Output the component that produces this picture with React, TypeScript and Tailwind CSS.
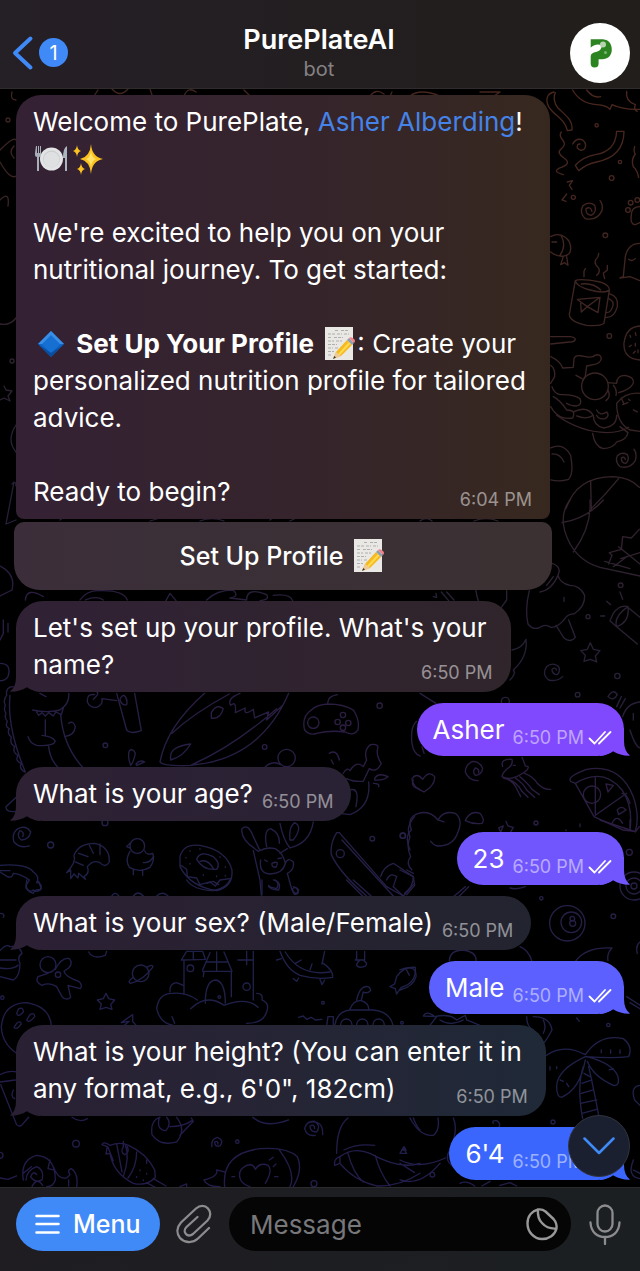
import type { ReactNode } from "react";

function Wallpaper() {
  return (
    <svg
      aria-hidden="true"
      className="pointer-events-none absolute inset-0 h-full w-full"
      viewBox="0 0 640 1271"
      preserveAspectRatio="xMidYMin slice"
    >
      <defs>
        <linearGradient id="ink" gradientUnits="userSpaceOnUse" x1="640" y1="90" x2="250" y2="1187">
          <stop offset="0" stopColor="#4a271c" />
          <stop offset="0.25" stopColor="#3a2424" />
          <stop offset="0.48" stopColor="#272036" />
          <stop offset="0.6" stopColor="#2b1d42" />
          <stop offset="0.8" stopColor="#1f214a" />
          <stop offset="1" stopColor="#221c4a" />
        </linearGradient>
        <mask id="doodles" maskUnits="userSpaceOnUse" x="0" y="0" width="640" height="1271">
          <g fill="none" stroke="#fff" strokeWidth="4" strokeLinecap="round" strokeLinejoin="round">
            {/* confetti, mug, flowers */}
            <g transform="translate(400 90) scale(.3333)">
              <path d="M462 6C440 10 436 30 446 50C462 78 494 84 502 122L516 120C520 90 494 74 474 54C462 40 460 20 466 8M518 0Q540 40 590 44Q620 46 630 58L636 44Q670 60 720 58M560 0Q580 26 602 20" />
              <path d="M650 124L672 124C672 180 640 206 590 216Q560 222 536 242L526 226Q550 200 586 194C626 188 648 168 650 124ZM484 126Q476 136 488 150T484 176T492 204T484 232T490 254" />
              <path d="M518 162Q530 142 548 150Q562 162 554 176Q542 186 532 174Q530 162 540 162M576 364Q572 348 558 356Q556 374 574 376Q592 366 584 346Q566 332 548 348Q538 370 556 386Q590 394 606 362Q610 344 600 332" />
              <path d="M502 276L518 272L508 286L516 298M500 312L486 330L498 334M680 4Q676 34 706 44Q700 60 712 64M704 170Q700 186 706 192Q692 210 700 230Q712 240 716 262" />
              <circle cx="590" cy="106" r="5" /><circle cx="660" cy="216" r="5" /><circle cx="635" cy="264" r="7" /><circle cx="520" cy="322" r="6" /><circle cx="616" cy="436" r="7" /><circle cx="628" cy="738" r="7" /><circle cx="692" cy="338" r="7" /><circle cx="684" cy="360" r="7" /><circle cx="712" cy="330" r="7" />
              <path d="M720 350Q694 350 694 376Q690 404 706 404L720 398M452 440C480 424 514 444 512 478C510 504 474 504 452 486M484 438Q500 466 480 496M456 456H470M490 500L482 524L494 518L504 526L500 500M720 460Q684 460 676 500L670 560L660 564L690 560L720 572M686 508Q696 516 706 506" />
              <path d="M526 572L508 674Q510 696 560 706Q600 710 612 700L628 602M526 572Q540 564 600 576Q630 586 628 600Q616 612 570 600Q530 590 526 572ZM544 582Q580 578 602 600M630 612Q656 620 652 650Q642 686 616 682M626 626Q644 634 638 650Q632 668 620 668" />
              <path d="M532 628L600 622L594 668L562 650L534 630M562 650L544 666L542 640M562 650L600 622M552 560V544L556 536M590 556Q602 548 596 534Q580 520 588 508Q596 502 596 490M614 566L610 550L622 540V526" />
              <path d="M452 740H510Q526 742 526 748Q522 758 508 756L452 762M720 708Q678 710 672 760Q670 806 720 810M690 736L692 742M706 728L708 736M688 770L694 766M706 760V768M700 790L706 784M714 780V788" />
              <path d="M452 800Q480 812 488 834L520 832L522 806Q526 794 546 798Q580 806 584 796Q602 790 604 806Q600 822 580 824L560 828L556 858L548 872M452 826Q466 836 464 860L452 880M528 856L546 866" />
              <circle cx="585" cy="889" r="40" />
              <path d="M624 878L650 880Q650 856 676 856Q704 862 700 880Q690 900 656 908M640 886Q652 900 648 916M624 900Q634 920 618 932M456 890Q462 910 480 914Q520 912 540 926Q548 944 530 948Q510 948 500 940M460 920Q480 930 500 960Q530 960 518 984Q480 990 460 962L452 950" />
              <path d="M470 976Q540 1026 620 1028Q660 1028 686 1012M520 966Q560 946 580 976Q560 990 530 978M650 940Q676 906 720 910M650 940Q650 1000 690 1020L720 1024M580 976Q580 1006 610 1014Q650 1010 650 976M590 960Q600 980 620 966Q630 976 616 986Q596 990 590 976M664 924L672 942M684 938L668 944M686 928L690 932M700 960L712 966M578 1030Q584 1070 610 1076Q640 1074 650 1056Q680 1050 684 1028L660 1010" />
              <path d="M452 1074Q490 1056 512 1096Q522 1150 506 1168Q480 1176 452 1170M456 1092Q480 1090 492 1116M676 1108Q674 1098 664 1104Q664 1120 678 1120Q690 1108 682 1094Q664 1084 652 1098Q644 1114 660 1130Q690 1138 706 1112Q712 1090 702 1078M498 1256Q530 1160 640 1160Q690 1162 718 1192M572 1172L574 1260M656 1166Q620 1210 574 1256" />
            </g>
            {/* ball, ice pop, torch, jellyfish, pizza */}
            <g transform="translate(400 500) scale(.3333)">
              <path d="M510 0Q480 40 494 92Q520 180 600 202L720 228M570 0Q576 80 520 156M610 0Q560 56 486 68M626 192L636 166L628 158L664 148L668 110L694 114L718 88M656 140L720 192M614 184L690 206M680 170L640 200M662 176L720 158" />
              <path d="M388 272Q374 330 384 372Q400 392 420 382Q436 370 452 382Q470 384 490 362Q504 340 522 342Q556 320 554 286Q540 256 510 256Q480 250 474 226M456 190Q486 200 474 226Q456 270 420 276M468 376L492 414Q512 430 526 412L506 360M492 292V304M440 256L460 230" />
              <path d="M630 362L650 380Q690 366 684 320Q660 312 640 340ZM650 380Q640 350 684 320M650 380L712 432M686 324L720 352M660 276L668 298M620 304L632 314M602 348H614" />
              <circle cx="564" cy="350" r="6" /><circle cx="662" cy="256" r="7" /><circle cx="652" cy="528" r="8" /><circle cx="533" cy="584" r="7" /><circle cx="316" cy="604" r="12" /><circle cx="408" cy="969" r="6" /><circle cx="8" cy="1007" r="8" />
              <path d="M571 428L580 448L600 452L586 468L590 486L571 478L552 484L556 466L542 452L562 448ZM470 510Q466 500 456 508Q456 524 472 524Q484 510 474 498Q456 486 440 500Q424 524 446 540Q472 546 488 530M336 450Q366 446 378 418Q384 470 340 510M340 510Q350 520 330 540" />
              <path d="M60 580L108 610M100 290L110 292L108 280M124 276L146 302M140 276L162 300M228 272Q232 310 250 320M320 272V300L304 322M624 590Q640 564 652 584Q640 606 624 590ZM650 620L664 590M660 624L676 596M668 650Q680 610 720 606M700 640V660M690 690Q706 740 720 744M50 664Q30 680 36 730Q40 760 60 768M66 740L72 760" />
              <path d="M236 818Q238 806 226 804Q216 816 226 826Q244 826 248 806Q240 784 218 784Q196 794 196 816Q206 842 234 842M68 838Q50 816 36 836Q36 860 72 876Q106 856 104 830Q88 810 68 838Z" />
              <path d="M308 800Q300 776 336 778Q340 796 322 806Q306 820 306 830Q326 840 350 830Q390 810 384 800L376 798Q370 780 366 772M310 834Q340 840 352 870L362 890M326 838Q350 846 366 874L384 892M346 834Q370 850 380 870L404 892M360 830Q384 850 396 868L418 884M374 820Q400 830 412 850Q430 870 452 868M340 796H346" />
              <path d="M512 844Q500 830 560 808Q660 790 700 890Q720 950 706 994L668 990L582 950L526 850ZM526 850Q610 800 666 870Q700 920 690 992M586 830V946L680 880" />
              <circle cx="576" cy="884" r="26" />
              <path d="M618 852L640 856L624 876ZM652 930Q664 914 678 930L656 944ZM636 970Q650 940 668 970M666 880Q680 880 690 910" />
              <path d="M30 1050Q12 1010 34 990Q20 950 56 940Q90 930 114 960Q130 930 166 940Q190 960 174 996Q160 1040 110 1038Q100 1034 92 1024M114 960L132 966M196 962Q210 930 240 940Q256 960 246 970Q220 974 196 962ZM318 964L324 978L340 982L332 996M302 996L296 984L310 978ZM498 990V992M540 972V980" />
            </g>
            {/* dinosaur, leaf, gamepad, chick, doughnut, rabbit */}
            <g transform="translate(0 580) scale(.3333)">
              <path d="M40 320Q16 320 20 346Q8 360 16 376Q10 390 18 400Q12 412 22 424Q14 440 28 446Q20 460 34 472Q28 490 44 500Q36 516 54 526Q44 544 64 550Q56 566 74 576M30 346Q20 440 76 576M120 340L138 350M206 340Q210 370 180 390Q140 400 98 390M110 396L116 406L126 398L136 408L146 398L160 408L168 396L184 404L190 384M182 404Q190 500 250 564M206 430Q220 420 226 440Q224 466 194 470M136 420V466M84 470Q90 490 110 496Q160 500 166 484Q160 470 126 466M146 500Q150 540 176 564" />
              <path d="M284 344Q260 340 262 366Q270 384 290 382Q310 374 306 356L350 362M280 358Q300 340 290 336M350 340L380 450Q390 464 424 452L404 340M372 346Q384 356 380 374Q366 378 360 360Q362 348 372 346ZM388 512Q398 504 406 520Q400 548 392 556Q382 530 388 512ZM408 552Q420 538 434 546L410 556Z" />
              <path d="M614 340Q500 440 480 546Q490 560 570 556Q780 540 866 340M516 460Q580 400 688 342M576 554Q700 500 830 386M512 536Q506 500 572 492Q550 530 512 540ZM720 340Q680 356 692 376Q710 360 706 398L736 384Q730 410 760 388L764 414L806 396L800 420L846 378M634 398Q650 370 670 386Q660 420 634 414ZM984 372Q980 350 1012 344M914 450Q904 410 934 390Q950 374 984 372Q1030 372 1060 390Q1080 420 1074 450Q1060 470 1036 456Q990 450 950 460Q930 468 914 450Z" />
              <circle cx="940" cy="428" r="17" /><circle cx="1029" cy="405" r="8" /><circle cx="1013" cy="426" r="8" /><circle cx="1045" cy="429" r="8" /><circle cx="1029" cy="443" r="8" /><circle cx="1139" cy="377" r="8" /><circle cx="316" cy="496" r="7" /><circle cx="794" cy="501" r="7" /><circle cx="152" cy="795" r="9" /><circle cx="1117" cy="776" r="7" /><circle cx="1209" cy="767" r="8" /><circle cx="1021" cy="821" r="12" /><circle cx="315" cy="728" r="9" /><circle cx="860" cy="534" r="26" />
              <path d="M796 560Q820 540 842 554M988 520Q1010 506 1018 540M994 540L1000 552M1030 580Q1040 560 1050 572Q1070 540 1090 560L1100 540Q1090 510 1112 494Q1140 490 1132 510Q1130 530 1144 550Q1130 580 1108 566L1090 604Q1060 606 1040 596M1124 596Q1134 576 1164 590Q1150 602 1124 600M1120 610Q1140 610 1136 620M1106 606Q1114 680 1050 704L1020 700M1050 630Q1080 620 1068 680" />
              <path d="M68 770Q74 756 60 752Q48 768 64 780Q88 780 92 756Q78 734 54 746Q34 760 42 786Q60 806 88 798M50 650L18 680Q16 698 50 694M0 856Q80 850 100 876Q120 890 110 908Q130 910 120 930Q106 926 100 940Q80 934 78 916L88 900Q60 880 40 880Q36 896 22 890L0 876M0 872H30" />
              <path d="M200 878Q230 846 222 826Q236 790 284 790Q330 800 328 846Q316 866 300 848Q280 838 262 860Q270 880 252 890L256 898L236 880L234 894L222 882L212 896V870ZM236 820L264 830M268 796L280 820M300 792V824M226 846L250 856" />
              <circle cx="412" cy="798" r="22" />
              <path d="M390 790L380 800L390 804M390 814Q374 840 388 862Q420 880 450 862Q466 840 458 820Q440 828 434 812M430 848Q450 850 460 830M400 870V884M428 870V886" />
              <path d="M540 830Q550 790 600 796Q680 810 696 870Q700 920 650 932Q570 920 540 860ZM590 838Q600 810 640 830Q664 850 650 868Q610 872 590 838ZM600 844Q624 836 640 866M542 856L560 868L562 890L590 894L600 914L630 906L646 918L660 900L690 896" />
              <path d="M570 812V814M600 806V808M660 830V832M676 860V862M570 850V852M650 888V890M610 884V886M676 886V888M558 832V834" />
              <path d="M776 814Q720 780 726 746Q744 728 760 770L780 812M800 800Q790 750 812 746Q840 760 838 790M760 812L780 900L784 946M780 812Q800 800 826 806Q850 820 856 850Q850 880 810 882Q776 880 782 840M856 850Q864 830 880 846Q884 870 862 880L876 930Q890 950 896 930Q884 914 876 930M820 900Q846 906 836 930Q810 930 806 916M794 840L802 844M834 836L844 834M816 850Q840 840 828 862Q814 862 816 850ZM940 726Q930 790 870 804Q850 780 840 730M870 780Q866 740 884 728Q910 740 880 780ZM840 820L862 806" />
              <path d="M1010 758Q990 790 994 824Q1020 880 1100 948M1018 758L1160 920L1210 948M1026 780L1180 948M1010 758H1018M1142 890Q1150 860 1180 850L1240 890Q1240 920 1214 940M1160 900Q1170 876 1190 890L1180 920M1236 870Q1216 850 1232 830Q1218 800 1230 770Q1216 740 1244 710M1240 600Q1230 620 1260 628M76 60Q80 20 130 50M240 60Q260 30 300 32Q370 30 382 60M256 60Q290 46 310 60M498 62L510 40L528 62M620 60Q650 30 700 30Q720 50 690 54L740 60Q740 20 800 44Q810 60 780 62M820 46Q870 40 878 62M10 120V160L0 180M24 130V156M0 250Q36 250 24 290Q14 304 0 302M334 950Q346 930 358 950M400 948Q414 930 430 948M470 948Q488 932 504 948" />
            </g>
            {/* gingerbread, planet, castle, saucer, robot, snail, cone, candy, bowl */}
            <g transform="translate(0 880) scale(.3333)">
              <path d="M80 0L78 24Q90 40 100 30Q110 40 124 26L116 4M0 100Q16 100 10 112M560 0Q580 30 640 32Q680 24 690 0M620 10L640 4L656 14M786 0V44M826 0Q840 10 830 26L806 20M880 20Q896 24 894 40Q880 50 878 30M1040 0L1090 50M1060 0L1116 50M1180 20L1210 48L1240 14" />
              <circle cx="144" cy="254" r="24" /><circle cx="174" cy="284" r="8" /><circle cx="571" cy="265" r="10" /><circle cx="740" cy="320" r="11" /><circle cx="969" cy="368" r="4" /><circle cx="1206" cy="428" r="4" /><circle cx="228" cy="791" r="10" /><circle cx="712" cy="785" r="5" /><circle cx="942" cy="911" r="9" /><circle cx="658" cy="351" r="4" /><circle cx="0" cy="826" r="9" /><circle cx="7" cy="353" r="5" />
              <path d="M166 268Q186 230 208 236Q220 250 206 264L192 274Q196 290 236 304Q250 316 240 326L204 316L212 352Q200 364 186 350L170 320Q150 306 126 316Q104 306 114 290L144 280M0 212Q20 190 30 200Q60 196 66 220Q50 230 60 250Q60 290 40 300L0 290M0 240H48M0 264Q40 270 54 256" />
              <circle cx="422" cy="280" r="25" />
              <path d="M400 292Q380 306 392 310Q430 300 458 262Q460 250 440 262M266 216Q280 240 316 226L320 214M318 340L326 356L344 360L332 374L336 388L318 382L300 388L304 372L292 360L310 356ZM4 440Q10 370 80 368Q150 380 154 438M4 440Q6 490 50 520M56 386Q70 380 70 396Q54 414 50 400ZM90 404Q104 396 104 410Q86 432 80 420ZM50 430Q62 420 64 432Q50 452 42 442ZM364 428L398 404V424L410 438M364 428L388 424L370 438" />
              <path d="M552 240V340M544 240L560 214H608L616 238ZM580 214V238M608 270L630 218M608 274H696L672 216M650 216V274M620 246H684M610 290L612 274M694 276V350M760 214V360M714 240H760M740 214V254M616 370Q616 300 648 300Q676 306 676 370M520 436Q480 430 470 386Q476 340 516 340Q560 336 592 360M510 336Q508 310 530 308L550 316M572 386Q620 340 672 376Q740 350 774 382M770 340Q790 340 786 360Q810 370 800 396Q790 430 740 430M516 410L524 430" />
              <path d="M840 214Q860 270 900 286Q950 300 998 292Q1000 270 970 250M830 240L844 236M856 216Q900 290 990 276M886 250L904 240M930 270L936 252M974 214L966 252M880 296L890 304L896 294M960 298L966 314L974 300M1070 214V236L1066 240L1094 240V214M1080 240Q1060 258 1080 262Q1100 262 1100 250L1090 240" />
              <path d="M1246 262Q1210 260 1190 290L1184 312L1170 320L1186 326L1190 342L1204 322Q1250 310 1246 262ZM1220 270L1228 286M1070 360Q1076 330 1090 322Q1110 314 1112 332Q1100 342 1090 336L1084 360M1050 388Q1060 360 1084 362Q1106 370 1106 386M1004 438Q1010 394 1050 390H1120Q1170 394 1180 438M984 410H1000V438M984 410L980 438M896 412L910 408L920 418L934 412L946 420L966 418" />
              <circle cx="1039" cy="434" r="17" /><circle cx="1087" cy="434" r="17" /><circle cx="1136" cy="434" r="17" />
              <path d="M0 584Q30 570 50 576M0 606L46 600M2 614L50 734Q60 744 70 730L86 712M40 630Q30 650 44 656M216 712Q240 730 262 716M480 712Q450 720 456 764Q480 800 530 786Q560 750 530 712M478 712Q468 750 498 752Q516 730 500 712M510 740Q550 740 576 722M540 766L580 724L574 714M758 712Q800 746 866 720" />
              <path d="M944 746Q944 730 930 738Q930 756 950 756Q964 736 944 724Q920 722 914 746Q920 770 946 766M968 764Q970 720 930 726M654 792Q654 780 644 786Q644 802 660 798Q674 780 652 772Q632 778 636 800" />
              <path d="M70 900Q60 840 110 826Q166 830 166 900Q160 920 140 920M110 884Q100 870 92 890Q104 910 126 900Q134 870 110 860Q80 870 78 900M96 920Q110 890 128 916M70 880L94 860M150 840L144 866L160 870M160 860Q174 900 200 894L210 884Q200 870 214 866Q236 880 230 920M0 894L24 898L50 888M206 900V918" />
              <path d="M306 794Q310 782 330 796Q360 784 386 796Q440 820 464 870L466 892Q440 920 400 910Q340 880 330 820L318 822L322 800ZM324 802L340 842M350 792L366 876M376 794Q390 830 370 890M410 816Q410 860 384 894M440 840V850M420 870V872M440 880V882M410 890V892M430 900V902M370 784V800Q360 818 374 824Q390 818 382 800M440 908L480 930M460 896L498 918" />
              <path d="M674 920Q664 820 780 806Q860 800 892 830Q910 870 880 920M838 810Q890 880 870 920M674 876L650 870Q656 890 612 900Q620 920 660 920M766 868Q760 850 740 856Q710 870 722 900Q730 914 750 920M766 868Q780 846 804 856Q820 870 796 910M696 890H704M824 890H834M808 840L820 832M820 860L828 852M540 920L560 912V920" />
              <path d="M1010 820Q1010 740 1044 714M1240 714Q1250 740 1260 750M1032 810Q1070 790 1124 796M1020 830Q1000 836 1004 856L1020 850ZM1020 830Q1060 800 1110 820Q1200 870 1260 850M1020 850Q1060 900 1130 918Q1200 920 1260 880M1044 820Q1060 880 1090 906M1126 826Q1140 880 1170 918M1200 820H1220L1210 804ZM1200 850L1244 878" />
            </g>
            {/* eight ball, palm */}
            <g transform="translate(400 820) scale(.3333)">
              <circle cx="502" cy="310" r="53" /><circle cx="514" cy="307" r="31" /><circle cx="517" cy="296" r="7" /><circle cx="518" cy="310" r="9" /><circle cx="640" cy="289" r="7" /><circle cx="688" cy="97" r="9" /><circle cx="424" cy="235" r="5" /><circle cx="625" cy="615" r="5" /><circle cx="702" cy="198" r="42" /><circle cx="702" cy="198" r="24" /><circle cx="702" cy="198" r="9" />
              <path d="M600 0L690 30L706 36L718 20M690 0V24M0 150L40 170L44 196L20 224M20 150L40 160M160 230L196 200M176 230L206 200M330 204Q350 210 376 200M528 422Q560 380 636 384Q620 400 624 422M680 530L720 556M690 548L720 566M720 366Q706 376 712 400M0 450Q50 430 48 470Q40 500 0 510M148 422Q150 390 190 390Q230 396 228 422M360 380Q386 390 396 424M90 616L110 590L70 588Q80 570 104 590Q150 580 170 600L196 586L200 600L240 616M120 600Q150 620 190 600M400 590Q450 590 456 630Q440 660 430 670M380 590Q380 620 400 630M430 600Q440 620 430 640M530 594L538 604" />
              <path d="M440 706Q490 670 556 704Q600 640 670 656Q700 680 686 710Q640 716 556 710Q470 750 470 800Q470 830 484 832Q540 810 556 720M560 710Q640 730 654 770Q660 800 640 796Q580 770 562 724M550 740Q530 800 548 896M566 740Q580 800 598 896M552 760L570 770M546 790L576 780M544 820L580 810M542 850L590 840M546 880L590 868M480 780L490 784M500 790L506 800M640 746L628 750M660 690V700M632 690V700M604 690V698M450 740V750M470 740V746M720 796Q690 800 704 840L720 856" />
            </g>
            {/* lower right */}
            <g transform="translate(400 1080) scale(.3333)">
              <circle cx="97" cy="284" r="7" /><circle cx="459" cy="126" r="6" />
              <path d="M30 114Q60 170 100 166Q120 150 114 114M160 114Q176 150 150 210Q130 240 160 260M0 240Q60 270 136 234M0 300Q60 320 120 250M6 210H18L12 200ZM280 130Q274 120 290 122Q304 130 296 144M180 310Q200 300 224 318M246 318L270 304M300 316L330 308L350 318M700 240Q680 290 720 296M700 270L720 280" />
            </g>
            {/* top edge and left margin */}
            <g strokeWidth="1.3">
              <path d="M12 92Q10 100 16 100M98 90L94 96M112 89Q120 98 128 89M150 89L152 95M184 96Q188 86 196 92M244 90L250 96M370 96Q376 88 384 94M392 92L390 96M410 96Q420 88 440 96M480 92H500L494 96M0 150Q14 136 16 140M0 162Q10 180 16 176M14 146Q8 152 14 158M0 200Q10 190 8 206M0 324Q10 326 16 318M4 386L6 390L12 391L8 396L10 401L4 398L0 400M16 425Q6 440 16 452M14 482L6 524L16 520M12 484Q16 480 16 486M0 566Q16 574 12 590L0 596" />
              <circle cx="8" cy="120" r="2" /><circle cx="12" cy="361" r="2" />
              <path d="M60 520L64 517M150 521L160 518M200 521Q212 516 224 521M270 520L274 517M290 521L296 518M420 521Q426 516 432 521M474 521Q486 516 498 521" />
            </g>
          </g>
        </mask>
      </defs>
      <rect width="640" height="1271" fill="url(#ink)" mask="url(#doodles)" />
    </svg>
  );
}

const emojiClass = "mx-px inline-block h-[34px] w-[34px] align-[-8px]";

function PlateEmoji() {
  return (
    <svg role="img" aria-label="Plate with fork and knife" className={emojiClass} viewBox="0 0 34 34">
      <path d="M1 4v9q0 2 2 2v14h2V15q2 0 2-2V4H6v7H5V4H4v7H3V4H2v7z" fill="#a7b0b8" />
      <path d="M33 4q-4 2-4 12h2v13h2z" fill="#a9b6c0" />
      <circle cx="17.500" cy="17" r="11.500" fill="#e3e4e6" />
      <circle cx="17.500" cy="17" r="8.500" fill="#cdced0" />
      <circle cx="17.500" cy="17.500" r="7.800" fill="#dfe0e2" />
    </svg>
  );
}

function SparklesEmoji() {
  return (
    <svg role="img" aria-label="Sparkles" className={emojiClass} viewBox="0 0 34 34">
      <g fill="#fcc21f">
        <path d="M21 2q1 13 12 15q-11 2-12 15q-1-13-11-15q10-2 11-15z" />
        <path d="M7 3q.5 5 4 6q-3.500 1-4 6q-.5-5-4-6q3.500-1 4-6z" />
        <path d="M11 21q.5 5 4 6q-3.500 1-4 6q-.5-5-4-6q3.500-1 4-6z" />
      </g>
      <path d="M21 9q1 7 5 8q-4 1-5 8q-1-7-5-8q4-1 5-8z" fill="#ffe36b" />
    </svg>
  );
}

function DiamondEmoji() {
  return (
    <svg role="img" aria-label="Blue diamond" className={emojiClass} viewBox="0 0 34 34">
      <path d="M17 4L30 17L17 30L4 17z" fill="#0e66c6" />
      <path d="M17 4L30 17H4z" fill="#3a8ee6" />
      <path d="M17 8L26 17L17 26L8 17z" fill="#1670d2" />
      <path d="M4 17L17 30L30 17L17 26z" fill="#0a4d9e" />
    </svg>
  );
}

function MemoEmoji() {
  return (
    <svg role="img" aria-label="Memo" className={emojiClass} viewBox="0 0 34 34">
      <path d="M3 0H31V33H3z" fill="#e9e8e5" />
      <path
        d="M13 3.500h4M19 3.500h7M6 7h7M15 7h5M22 7h5M6 10.500h4M12 10.500h9M6 14h6M14 14h6M6 17.500h9M6 21h5M13 21h3M6 24.500h6M6 28h4"
        stroke="#a8a8a8"
        strokeWidth="0.900"
        strokeDasharray="3 1"
      />
      <path d="M11 32L14 25L25 13L30 18L19 29z" fill="#f5b921" />
      <path d="M16 27L27 15L28.500 16.500L17 29z" fill="#ffdc4d" />
      <path d="M11 32L14 25L19 29z" fill="#efc999" />
      <path d="M11 32L12.300 29L14 30.600z" fill="#333" />
      <path d="M25 13L27 11L32 16L30 18z" fill="#8f9fb0" />
      <path d="M27 11Q29 9 32 12Q34 14 32 16z" fill="#ee8287" />
    </svg>
  );
}

function Tail({ side, className }: { side: "left" | "right"; className: string }) {
  const place = side === "left" ? "-left-[6px]" : "-right-[6px] -scale-x-100";
  return (
    <svg aria-hidden="true" viewBox="0 0 30 28" className={`absolute bottom-0 h-7 w-[30px] ${place} ${className}`}>
      <path d="M6 0V13Q6 23 0 27.600Q9 28 17 23.200Q22 27 30 28V0z" fill="currentColor" />
    </svg>
  );
}

function Time({ children }: { children: ReactNode }) {
  return <time className="whitespace-nowrap text-[18px] leading-5 text-white/50">{children}</time>;
}

function Incoming({
  lead,
  last,
  tone,
  tail,
}: {
  lead?: string;
  last: string;
  tone: string;
  tail: string;
}) {
  return (
    <li className={`relative mt-[11px] w-fit rounded-[27px] bg-linear-to-r pt-2 pr-[18px] pb-[9px] pl-[17px] ${tone}`}>
      <Tail side="left" className={tail} />
      {lead && <p className="relative pr-[6px]">{lead}</p>}
      <div className="relative flex items-end justify-between gap-[9px]">
        <p>{last}</p>
        <Time>6:50 PM</Time>
      </div>
    </li>
  );
}

function Outgoing({ text, tone, tail }: { text: string; tone: string; tail: string }) {
  return (
    <li className={`relative mt-[11px] flex w-fit items-end self-end rounded-[27px] pt-2 pr-3 pb-2 pl-4 ${tone}`}>
      <Tail side="right" className={tail} />
      <p className="relative mr-2">{text}</p>
      <span className="relative flex items-center gap-1">
        <Time>6:50 PM</Time>
        <svg role="img" aria-label="Read" viewBox="0 0 24 16" className="h-4 w-6">
          <path
            d="M1.500 8.500L6.500 13.500L17 2M11 13.500L22.500 2"
            fill="none"
            stroke="#fff"
            strokeWidth="1.800"
            strokeLinecap="round"
            strokeLinejoin="round"
          />
        </svg>
      </span>
    </li>
  );
}

export default function App() {
  return (
    <div className="relative flex min-h-screen flex-col overflow-hidden bg-black font-['Inter','Noto_Sans',sans-serif] text-[26px] leading-[37px] text-white">
      <Wallpaper />

      <header className="relative flex h-[89px] items-center justify-between border-b border-[#302c2d] bg-linear-to-r from-[#251f26] to-[#211e1b] pt-[17px] pr-[10px] pl-[11px]">
        <a href="#chats" aria-label="Back, 1 unread chat" className="flex w-[57px] items-center gap-[5px]">
          <svg aria-hidden="true" viewBox="0 0 23 36" className="h-9 w-[23px] shrink-0">
            <path d="M19.500 3.500L4 18L19.500 32.500" fill="none" stroke="#3f8af7" strokeWidth="4" strokeLinecap="round" strokeLinejoin="round" />
          </svg>
          <span className="flex h-[29px] w-[29px] shrink-0 items-center justify-center rounded-full bg-[#3f8af7] text-[20px] leading-none">
            1
          </span>
        </a>
        <div className="flex flex-col items-center">
          <h1 className="text-[27px] leading-[32px] font-semibold">PurePlateAI</h1>
          <p className="text-[20px] leading-[26px] text-[#858284]">bot</p>
        </div>
        <button type="button" aria-label="PurePlateAI profile" className="h-[60px] w-[60px] rounded-full bg-white">
          <svg aria-hidden="true" viewBox="0 0 60 60" className="h-full w-full">
            <path
              d="M20.700 16.300H33C39 17 41.800 21 41.800 26.500C41.800 32.500 38 36.300 32 36.300H28.600V41Q28.300 44.500 24.600 44.500Q20.700 44.500 20.700 40.500V34C20.700 30.500 23 29.500 26 29C30 28 31.300 26 32 22.500C28 20.500 24.500 21.500 20.700 24.500z"
              fill="#2b8420"
            />
            <circle cx="33" cy="21.500" r="3" fill="#b5d3b0" />
            <circle cx="35.500" cy="29.500" r="1.500" fill="#7db573" />
          </svg>
        </button>
      </header>

      <main className="relative flex-1 pt-[6px] pr-4 pb-[6px] pl-4">
        <ul className="flex flex-col">
          <li className="w-full max-w-[534px] rounded-t-[25px] rounded-b-lg bg-linear-to-r from-[#342134] via-[#35242c] to-[#37281f] pt-2 pr-[18px] pb-[9px] pl-[17px]">
            <p>
              Welcome to PurePlate,{" "}
              <a href="#asher" className="text-[#4583e8]">
                Asher Alberding
              </a>
              !
              <br />
              <PlateEmoji />
              <SparklesEmoji />
            </p>
            <p className="mt-[37px]">
              We're excited to help you on your
              <br />
              nutritional journey. To get started:
            </p>
            <p className="mt-[37px]">
              <DiamondEmoji /> <strong className="font-bold">Set Up Your Profile</strong> <MemoEmoji />: Create your
              personalized nutrition profile for tailored advice.
            </p>
            <div className="mt-[37px] flex items-end justify-between">
              <p>Ready to begin?</p>
              <Time>6:04 PM</Time>
            </div>
          </li>
          <li className="-ml-[2px] mt-[3px] w-full max-w-[538px]">
            <button
              type="button"
              className="flex h-[68px] w-full items-center justify-center gap-[7px] rounded-t-[10px] rounded-b-[26px] bg-linear-to-r from-[#3b2e3a] to-[#3b3132] text-[25px] font-medium"
            >
              Set Up Profile
              <MemoEmoji />
            </button>
          </li>
          <Incoming
            lead="Let's set up your profile. What's your"
            last="name?"
            tone="from-[#302135] to-[#30252b]"
            tail="text-[#302135]"
          />
          <Outgoing text="Asher" tone="bg-[#8049fe]" tail="text-[#8049fe]" />
          <Incoming last="What is your age?" tone="from-[#2e2134] to-[#292234]" tail="text-[#2e2134]" />
          <Outgoing text="23" tone="bg-[#7156fe]" tail="text-[#7156fe]" />
          <Incoming last="What is your sex? (Male/Female)" tone="from-[#2c2034] to-[#22242f]" tail="text-[#2c2034]" />
          <Outgoing text="Male" tone="bg-[#5b60fe]" tail="text-[#5b60fe]" />
          <Incoming
            lead="What is your height? (You can enter it in"
            last={"any format, e.g., 6'0\", 182cm)"}
            tone="from-[#2a2034] to-[#1f2937]"
            tail="text-[#2a2034]"
          />
          <Outgoing text="6'4" tone="bg-[#3b66fd]" tail="text-[#3b66fd]" />
        </ul>
        <button
          type="button"
          aria-label="Scroll to latest message"
          className="absolute right-[10px] bottom-[10px] flex h-[62px] w-[62px] items-center justify-center rounded-full border border-[#30343f] bg-[#1a2030]"
        >
          <svg aria-hidden="true" viewBox="0 0 32 18" className="h-[18px] w-8">
            <path d="M1.500 1.500L16 16L30.500 1.500" fill="none" stroke="#3f8af7" strokeWidth="2.500" strokeLinecap="round" strokeLinejoin="round" />
          </svg>
        </button>
      </main>

      <footer className="relative flex h-[84px] items-start border-t border-[#2b2a2d] bg-linear-to-r from-[#1f1d22] to-[#1b1f22] pt-[9px] pr-[18px] pl-4">
        <button type="button" className="flex h-[54px] w-36 shrink-0 items-center gap-[13px] rounded-full bg-[#3f8af7] pl-[19px] text-[25px] font-medium">
          <svg aria-hidden="true" viewBox="0 0 25 20" className="h-5 w-[25px]">
            <path d="M1.500 2H23.500M1.500 10H23.500M1.500 18.500H23.500" stroke="#fff" strokeWidth="2.500" strokeLinecap="round" />
          </svg>
          Menu
        </button>
        <button type="button" aria-label="Attach file" className="ml-4 flex h-[54px] w-9 shrink-0 items-center justify-center">
          <svg aria-hidden="true" viewBox="0 0 36 40" className="h-10 w-9">
            <path
              d="M33 24L22 34.500C16 40 8 38.500 4 34C0 29 1 23 5 18.500L20 4.500C24 1 29 1 32 4.500C35 8 35 13 31.500 16.500L17 30C14.500 32 11.500 32 10 30C8 28 8.500 25 10.500 23L21.500 13"
              fill="none"
              stroke="#8c8c8e"
              strokeWidth="2.300"
              strokeLinecap="round"
            />
          </svg>
        </button>
        <div className="ml-[17px] flex h-[54px] min-w-0 flex-1 items-center rounded-full bg-[#050506] pr-3 pl-[21px]">
          <input
            type="text"
            aria-label="Message"
            placeholder="Message"
            className="min-w-0 flex-1 bg-transparent outline-none placeholder:text-[#78787b]"
          />
          <button type="button" aria-label="Stickers" className="h-[34px] w-[34px]">
            <svg aria-hidden="true" viewBox="0 0 34 34" className="h-full w-full">
              <path
                d="M13 2.500C7 4 2.500 9 2.500 16.500C2.500 25 9 32 17 32C24 32 30 28 31.500 21.500C32 18 31 15 28.500 12L20.500 4.500C18 2.500 16 2 13 2.500C12.500 8 13.500 12.500 17 16C20.500 20 25.500 22 31.500 21.500"
                fill="none"
                stroke="#98989a"
                strokeWidth="2.400"
                strokeLinejoin="round"
              />
            </svg>
          </button>
        </div>
        <button type="button" aria-label="Record voice message" className="ml-[17px] flex h-[54px] w-[34px] shrink-0 items-center justify-center">
          <svg aria-hidden="true" viewBox="0 0 34 42" className="h-[42px] w-[34px]">
            <g fill="none" stroke="#8c8c8e" strokeWidth="2.300" strokeLinecap="round">
              <rect x="9.500" y="2.500" width="15" height="26" rx="7.500" />
              <path d="M2.500 19.500C3 29 9 34 17 34C25 34 31 29 31.500 19.500M17 34V41" />
            </g>
          </svg>
        </button>
      </footer>
    </div>
  );
}
